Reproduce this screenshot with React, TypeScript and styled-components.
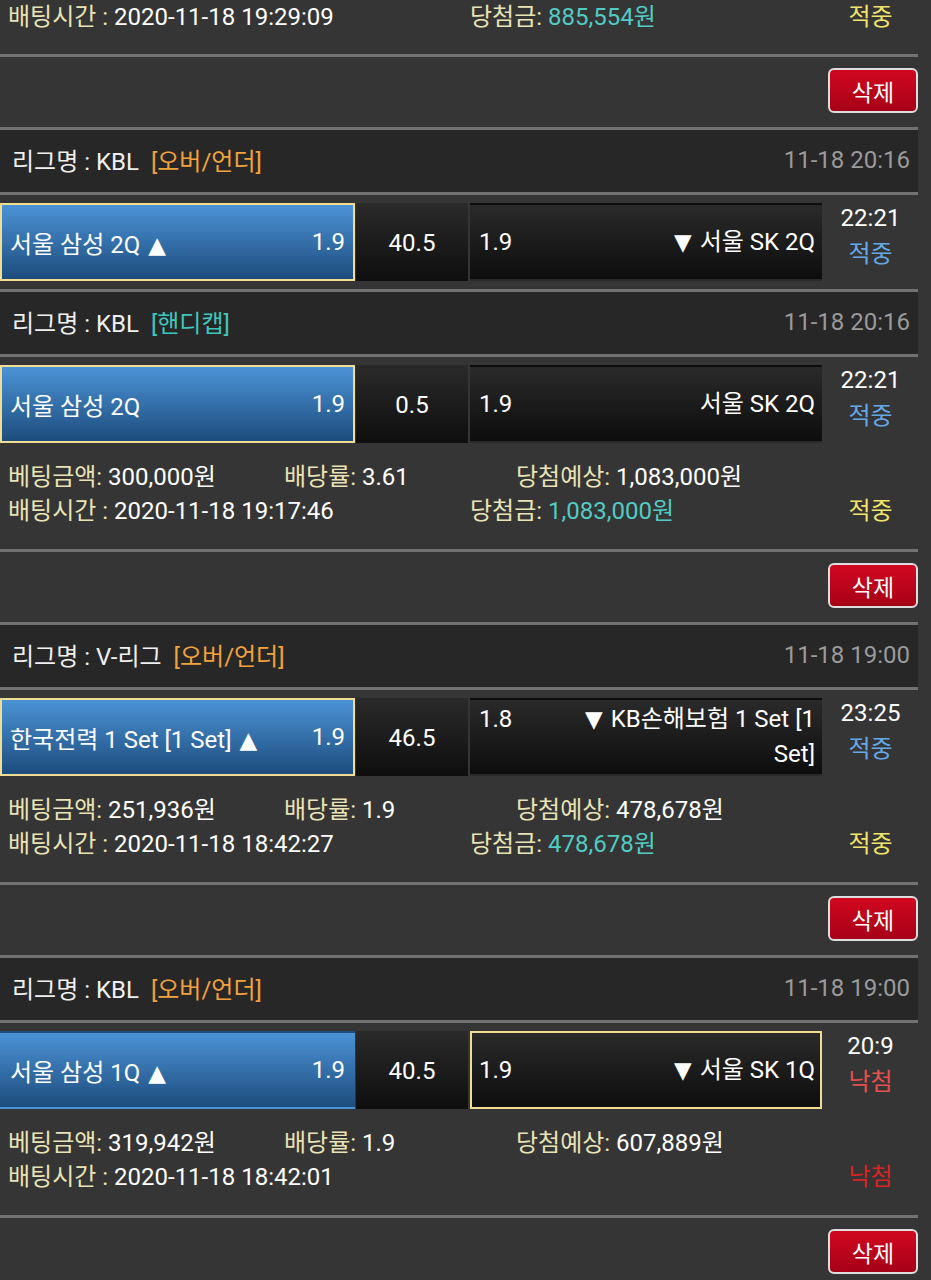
import React from "react";
import styled, { createGlobalStyle } from "styled-components";

const GlobalStyle = createGlobalStyle`
    body {
        margin: 0;
        background: #353535;
        font-family: Roboto, "Noto Sans CJK KR", sans-serif;
        color: #fff;
    }
`;

type Game = {
    league: string;
    tag: string;
    tagColor: string;
    date: string;
    home: string;
    homeOdds: string;
    line: string;
    awayOdds: string;
    away: string;
    time: string;
    result: string;
    pick: "home" | "away";
};

type Bet = {
    games: Game[];
    amount?: string;
    rate?: string;
    expected?: string;
    betTime: string;
    win?: string;
    status: string;
    partial?: boolean;
};

const ORANGE = "#f2a23c";
const TEAL = "#3ec6bd";

const bets: Bet[] = [
    {
        games: [],
        betTime: "2020-11-18 19:29:09",
        win: "885,554원",
        status: "적중",
        partial: true,
    },
    {
        games: [
            {
                league: "KBL", tag: "[오버/언더]", tagColor: ORANGE, date: "11-18 20:16",
                home: "서울 삼성 2Q ▲", homeOdds: "1.9", line: "40.5", awayOdds: "1.9",
                away: "▼ 서울 SK 2Q", time: "22:21", result: "적중", pick: "home",
            },
            {
                league: "KBL", tag: "[핸디캡]", tagColor: TEAL, date: "11-18 20:16",
                home: "서울 삼성 2Q", homeOdds: "1.9", line: "0.5", awayOdds: "1.9",
                away: "서울 SK 2Q", time: "22:21", result: "적중", pick: "home",
            },
        ],
        amount: "300,000원",
        rate: "3.61",
        expected: "1,083,000원",
        betTime: "2020-11-18 19:17:46",
        win: "1,083,000원",
        status: "적중",
    },
    {
        games: [
            {
                league: "V-리그", tag: "[오버/언더]", tagColor: ORANGE, date: "11-18 19:00",
                home: "한국전력 1 Set [1 Set] ▲", homeOdds: "1.9", line: "46.5", awayOdds: "1.8",
                away: "▼ KB손해보험 1 Set [1 Set]", time: "23:25", result: "적중", pick: "home",
            },
        ],
        amount: "251,936원",
        rate: "1.9",
        expected: "478,678원",
        betTime: "2020-11-18 18:42:27",
        win: "478,678원",
        status: "적중",
    },
    {
        games: [
            {
                league: "KBL", tag: "[오버/언더]", tagColor: ORANGE, date: "11-18 19:00",
                home: "서울 삼성 1Q ▲", homeOdds: "1.9", line: "40.5", awayOdds: "1.9",
                away: "▼ 서울 SK 1Q", time: "20:9", result: "낙첨", pick: "away",
            },
        ],
        amount: "319,942원",
        rate: "1.9",
        expected: "607,889원",
        betTime: "2020-11-18 18:42:01",
        status: "낙첨",
    },
];

// draw the ▲ / ▼ marks in their own font/size
const withArrows = (text: string) =>
    text.split(/([▲▼])/).map((part, i) =>
        part === "▲" || part === "▼" ? <Arrow key={i}>{part}</Arrow> : part
    );

export default function App() {
    return (
        <>
            <GlobalStyle />
            <Page>
                {bets.map((bet, i) => (
                    <BetBlock key={i}>
                        {bet.games.map((g, j) => (
                            <React.Fragment key={j}>
                                <LeagueBar>
                                    <LeagueName>
                                        리그명 : {g.league}
                                        <Tag $color={g.tagColor}>{g.tag}</Tag>
                                    </LeagueName>
                                    <GameDate>{g.date}</GameDate>
                                </LeagueBar>
                                <MatchRow>
                                    <HomeCell $picked={g.pick === "home"}>
                                        <span>{withArrows(g.home)}</span>
                                        <span>{g.homeOdds}</span>
                                    </HomeCell>
                                    <LineCell>{g.line}</LineCell>
                                    <AwayCell $picked={g.pick === "away"}>
                                        <AwayInner>
                                            <span>{g.awayOdds}</span>
                                            <AwayName>{withArrows(g.away)}</AwayName>
                                        </AwayInner>
                                    </AwayCell>
                                    <TimeCell>
                                        <span>{g.time}</span>
                                        <Result $win={g.result === "적중"}>{g.result}</Result>
                                    </TimeCell>
                                </MatchRow>
                            </React.Fragment>
                        ))}
                        <Info $partial={bet.partial}>
                            {!bet.partial && (
                                <InfoLineTop>
                                    <span><Label>베팅금액:</Label> {bet.amount}</span>
                                    <span><Label>배당률:</Label> {bet.rate}</span>
                                    <span><Label>당첨예상:</Label> {bet.expected}</span>
                                </InfoLineTop>
                            )}
                            <InfoLineBottom>
                                <span><Label>배팅시간 :</Label> {bet.betTime}</span>
                                <span>
                                    {bet.win && (
                                        <>
                                            <Label>당첨금:</Label> <WinValue>{bet.win}</WinValue>
                                        </>
                                    )}
                                </span>
                                <Status $win={bet.status === "적중"}>{bet.status}</Status>
                            </InfoLineBottom>
                        </Info>
                        <DeleteRow>
                            <DeleteButton>삭제</DeleteButton>
                        </DeleteRow>
                    </BetBlock>
                ))}
            </Page>
        </>
    );
}

const SEP = "3px solid #727272";

const Page = styled.div`
    width: 918px;
    font-size: 24px;
`;

const BetBlock = styled.div``;

const LeagueBar = styled.div`
    box-sizing: border-box;
    border-top: ${SEP};
    height: 65px;
    background: #272727;
    display: flex;
    align-items: center;
    justify-content: space-between;
    padding: 0 8px 3px 12px;
`;

const LeagueName = styled.div`
    color: #f0f0f0;
`;

const Tag = styled.span<{ $color: string }>`
    color: ${(p) => p.$color};
    margin-left: 12px;
`;

const GameDate = styled.div`
    color: #9a9a9a;
`;

const MatchRow = styled.div`
    border-top: ${SEP};
    display: grid;
    grid-template-columns: 355px 112px 353px 1fr;
    grid-template-rows: 78px;
    column-gap: 1px;
    padding: 8px 0;
`;

const Arrow = styled.span`
    font-family: "DejaVu Sans", sans-serif;
    font-size: 23px;
    margin: 0 2px;
`;

const HomeCell = styled.div<{ $picked: boolean }>`
    box-sizing: border-box;
    height: 78px;
    border: 2px solid ${(p) => (p.$picked ? "#f0dc92" : "transparent")};
    background: linear-gradient(#4b93d6, #1d4c7d);
    display: flex;
    align-items: center;
    justify-content: space-between;
    padding: 0 8px;
`;

const LineCell = styled.div`
    box-sizing: border-box;
    height: 78px;
    background: linear-gradient(#2a2a2a, #0e0e0e);
    display: flex;
    align-items: center;
    justify-content: center;
    padding-top: 2px;
`;

const AwayCell = styled.div<{ $picked: boolean }>`
    box-sizing: border-box;
    height: 78px;
    border: 2px solid ${(p) => (p.$picked ? "#f0dc92" : "transparent")};
    background: linear-gradient(#2a2a2a, #0d0d0d);
    display: flex;
    align-items: center;
    padding: 0 5px 0 7px;
    margin-left: 1px;
`;

const AwayInner = styled.div`
    flex: 1;
    display: flex;
    justify-content: space-between;
    align-items: flex-start;
    line-height: 35px;
`;

const AwayName = styled.span`
    max-width: 258px;
    text-align: right;
`;

const TimeCell = styled.div`
    display: flex;
    flex-direction: column;
    align-items: center;
    margin-top: -3px;
    line-height: 36px;
`;

const Result = styled.span<{ $win: boolean }>`
    color: ${(p) => (p.$win ? "#64a9e6" : "#e5504f")};
`;

const Info = styled.div<{ $partial?: boolean }>`
    padding: ${(p) => (p.$partial ? "0 0 20px" : "9px 0 21px")};
    line-height: 34px;
`;

const InfoLineTop = styled.div`
    display: grid;
    grid-template-columns: 276px 232px 1fr;
    padding-left: 8px;
`;

const InfoLineBottom = styled.div`
    display: grid;
    grid-template-columns: 462px 353px 1fr;
    padding-left: 8px;
`;

const Label = styled.span`
    color: #e9e3b5;
`;

const WinValue = styled.span`
    color: #52cbc3;
`;

const Status = styled.span<{ $win: boolean }>`
    text-align: center;
    color: ${(p) => (p.$win ? "#f1e46a" : "#d92323")};
`;

const DeleteRow = styled.div`
    box-sizing: border-box;
    border-top: ${SEP};
    height: 73px;
    display: flex;
    align-items: flex-start;
    justify-content: flex-end;
    padding-top: 11px;
`;

const DeleteButton = styled.button`
    box-sizing: border-box;
    width: 90px;
    height: 45px;
    border: 2px solid #dedede;
    border-radius: 6px;
    background: linear-gradient(#d1071f, #a60117);
    color: #fff;
    font-family: inherit;
    font-size: 23px;
    padding: 0;
`;
